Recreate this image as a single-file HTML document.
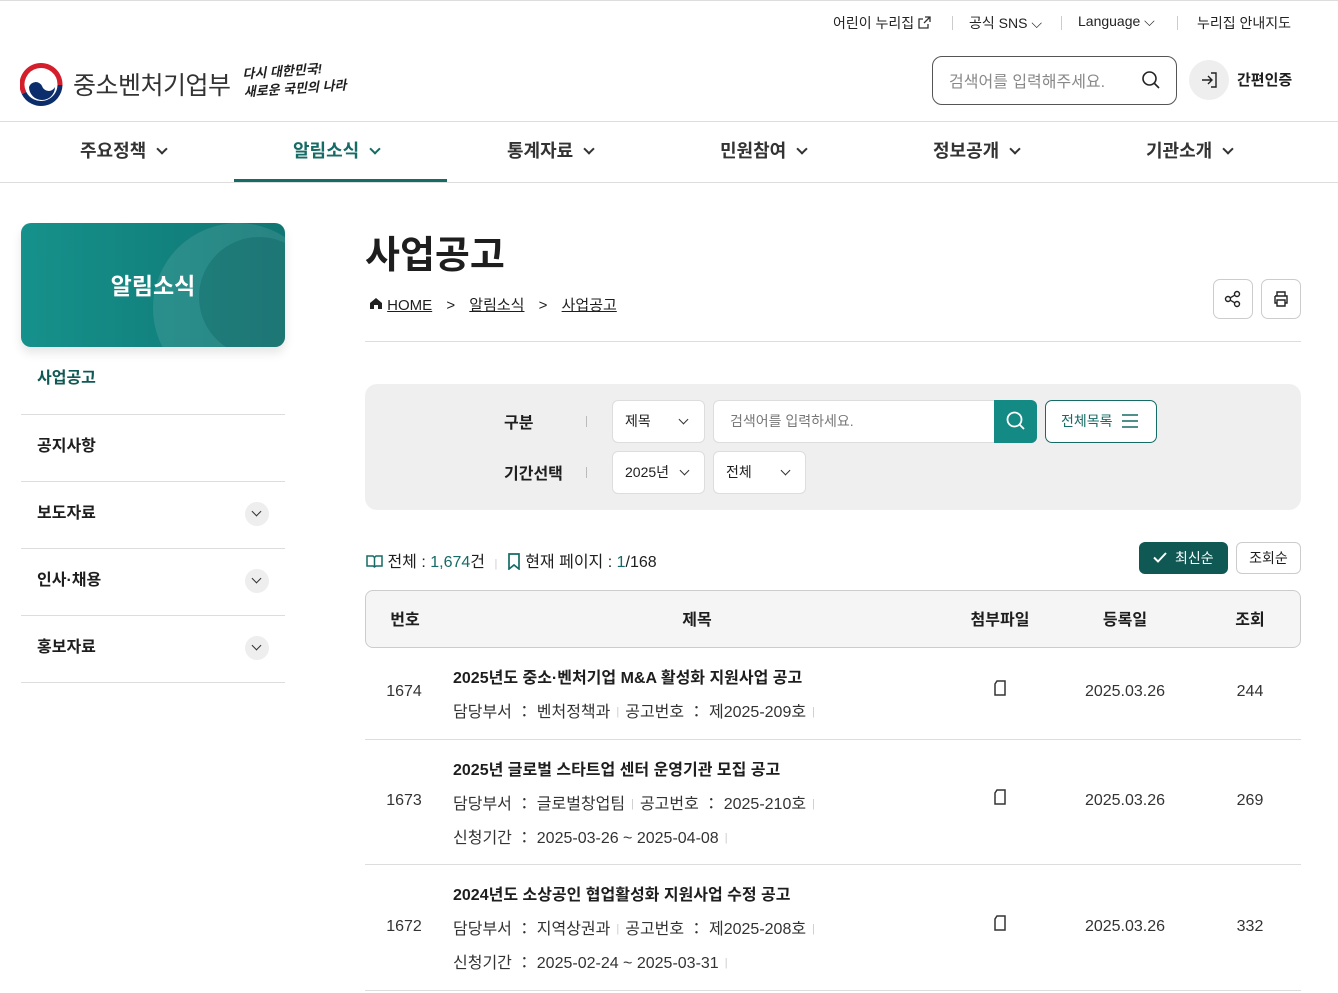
<!DOCTYPE html>
<html lang="ko"><head><meta charset="utf-8"><style>
*{box-sizing:border-box;margin:0;padding:0}
body{width:1338px;height:993px;overflow:hidden;background:#fff;font-family:"Liberation Sans","Noto Sans CJK KR",sans-serif;color:#1e1e1e;position:relative}
.a{position:absolute}
.top{top:0;left:0;width:1338px;height:1px;background:#ddd}
.util{top:13px;font-size:14px;color:#222;white-space:nowrap}
.sep{width:1px;height:14px;background:#ccc;top:16px}
.nav{top:121px;left:0;width:1338px;height:62px;border-top:1px solid #ddd;border-bottom:1px solid #ddd}
.nav div{position:absolute;top:15px;font-size:18px;font-weight:700;color:#333}
.chev{display:inline-block;width:8px;height:8px;border-right:2px solid #333;border-bottom:2px solid #333;transform:rotate(45deg);margin-left:12px;position:relative;top:-4px}
.side{left:21px;width:264px;border-bottom:1px solid #ddd;font-size:16px;font-weight:700;padding-left:16px}
.circ{position:absolute;right:16px;width:24px;height:24px;border-radius:50%;background:#eee}
.circ:after{content:"";position:absolute;left:8px;top:6px;width:6px;height:6px;border-right:1.5px solid #333;border-bottom:1.5px solid #333;transform:rotate(45deg)}
.box{background:#fff;border:1px solid #ddd;border-radius:6px;font-size:14px;padding:0 12px;line-height:41px}
.sm{display:inline-block;width:7px;height:7px;border-right:1.6px solid #333;border-bottom:1.6px solid #333;transform:rotate(45deg);position:absolute;top:15px}
.row{left:365px;width:936px;border-bottom:1px solid #ddd}
.t{position:absolute;left:88px;font-size:16px;font-weight:700}
.m{position:absolute;left:88px;font-size:16px;color:#333;white-space:nowrap}
.m i{font-style:normal;color:#ccc;font-size:11px;margin:0 6px;position:relative;top:-2px}
.c{position:absolute;font-size:16px;color:#333;transform:translateX(-50%)}
</style></head><body>
<div class="a top"></div>
<div class="a util" style="left:833px">어린이 누리집 <svg width="13" height="13" viewBox="0 0 13 13" style="vertical-align:-1px"><path d="M7 1h5v5M12 1L6 7M10 8v4H1V3h4" fill="none" stroke="#333" stroke-width="1.3"/></svg></div>
<div class="a sep" style="left:952px"></div>
<div class="a util" style="left:969px">공식 SNS ⌵</div>
<div class="a sep" style="left:1061px"></div>
<div class="a util" style="left:1078px">Language ⌵</div>
<div class="a sep" style="left:1177px"></div>
<div class="a util" style="left:1197px">누리집 안내지도</div>

<svg class="a" style="left:20px;top:63px" width="44" height="44" viewBox="0 0 44 44"><circle cx="22" cy="22" r="21" fill="#fff"/><path d="M4 30A19 19 0 1 1 40 22" fill="none" stroke="#d51e2b" stroke-width="5"/><path d="M40 22A19 19 0 0 1 4 30" fill="none" stroke="#0b2d6b" stroke-width="5"/><path d="M9 24a7 7 0 0 1 13 -1a7 7 0 0 0 13 1a13 13 0 0 1 -26 0z" fill="#0b2d6b"/></svg>
<div class="a" style="left:73px;top:66px;font-size:25px;color:#333;letter-spacing:-0.5px">중소벤처기업부</div>
<div class="a" style="left:243px;top:62px;font-size:13px;font-style:italic;font-weight:700;line-height:18px;transform:rotate(-4deg)">다시 대한민국!<br>새로운 국민의 나라</div>

<div class="a" style="left:932px;top:56px;width:245px;height:49px;border:1px solid #555;border-radius:10px"></div>
<div class="a" style="left:949px;top:68px;font-size:16px;color:#888">검색어를 입력해주세요.</div>
<svg class="a" style="left:1141px;top:70px" width="20" height="20" viewBox="0 0 20 20"><circle cx="8.5" cy="8.5" r="6.5" fill="none" stroke="#222" stroke-width="1.6"/><path d="M13.5 13.5L18 18" stroke="#222" stroke-width="1.6"/></svg>
<div class="a" style="left:1189px;top:60px;width:40px;height:40px;border-radius:50%;background:#eee"></div>
<svg class="a" style="left:1200px;top:71px" width="18" height="18" viewBox="0 0 18 18"><path d="M2 9h9M8 5l4 4-4 4M11 2h5v14h-5" fill="none" stroke="#222" stroke-width="1.4"/></svg>
<div class="a" style="left:1237px;top:69px;font-size:15px;font-weight:700">간편인증</div>

<div class="a nav">
<div style="left:80px">주요정책<span class="chev"></span></div>
<div style="left:293px;color:#156b65">알림소식<span class="chev" style="border-color:#156b65"></span></div>
<div style="left:507px">통계자료<span class="chev"></span></div>
<div style="left:720px">민원참여<span class="chev"></span></div>
<div style="left:933px">정보공개<span class="chev"></span></div>
<div style="left:1146px">기관소개<span class="chev"></span></div>
</div>
<div class="a" style="left:234px;top:179px;width:213px;height:3px;background:#156b65"></div>

<div class="a" style="left:21px;top:223px;width:264px;height:124px;border-radius:10px;background:linear-gradient(90deg,#16918b,#0f7673);overflow:hidden;box-shadow:0 6px 10px rgba(0,0,0,.1)">
<div style="position:absolute;left:132px;top:0;width:170px;height:170px;border-radius:50%;background:rgba(255,255,255,.1)"></div>
<div style="position:absolute;left:178px;top:14px;width:120px;height:120px;border-radius:50%;background:rgba(0,80,80,.25)"></div>
<div style="position:absolute;left:0;width:264px;top:44px;text-align:center;color:#fff;font-size:23px;font-weight:700">알림소식</div></div>
<div class="a side" style="top:357px;height:58px;line-height:44px;color:#0f5854">사업공고</div>
<div class="a side" style="top:415px;height:67px;line-height:63px">공지사항</div>
<div class="a side" style="top:482px;height:67px;line-height:63px">보도자료<span class="circ" style="top:20px"></span></div>
<div class="a side" style="top:549px;height:67px;line-height:63px">인사·채용<span class="circ" style="top:20px"></span></div>
<div class="a side" style="top:616px;height:67px;line-height:63px">홍보자료<span class="circ" style="top:20px"></span></div>

<div class="a" style="left:365px;top:224px;font-size:38px;font-weight:700">사업공고</div>
<div class="a" style="left:369px;top:294px;font-size:15px;white-space:nowrap">
<svg width="14" height="13" viewBox="0 0 14 13"><path d="M1 6L7 1l6 5v6H9V8H5v4H1z" fill="#222"/></svg>
<u>HOME</u> <span style="margin:0 10px">&gt;</span> <u>알림소식</u> <span style="margin:0 10px">&gt;</span> <u>사업공고</u></div>
<div class="a" style="left:1213px;top:279px;width:40px;height:40px;border:1px solid #ccc;border-radius:7px"></div>
<svg class="a" style="left:1223px;top:289px" width="20" height="20" viewBox="0 0 20 20"><circle cx="14" cy="5" r="2.5" fill="none" stroke="#222" stroke-width="1.4"/><circle cx="14" cy="15" r="2.5" fill="none" stroke="#222" stroke-width="1.4"/><circle cx="5" cy="10" r="2.5" fill="none" stroke="#222" stroke-width="1.4"/><path d="M7.2 8.8l4.6-2.6M7.2 11.2l4.6 2.6" stroke="#222" stroke-width="1.4"/></svg>
<div class="a" style="left:1261px;top:279px;width:40px;height:40px;border:1px solid #ccc;border-radius:7px"></div>
<svg class="a" style="left:1271px;top:289px" width="20" height="20" viewBox="0 0 20 20"><path d="M6 7V3h8v4M4 7h12v7h-2M6 14H4V7M6 11h8v6H6z" fill="none" stroke="#222" stroke-width="1.4"/></svg>
<div class="a" style="left:365px;top:341px;width:936px;height:1px;background:#ddd"></div>

<div class="a" style="left:365px;top:384px;width:936px;height:126px;background:#efefef;border-radius:12px"></div>
<div class="a" style="left:504px;top:409px;font-size:16px;font-weight:700">구분</div>
<div class="a" style="left:586px;top:416px;width:1px;height:11px;background:#bbb"></div>
<div class="a" style="left:504px;top:460px;font-size:16px;font-weight:700">기간선택</div>
<div class="a" style="left:586px;top:467px;width:1px;height:11px;background:#bbb"></div>
<div class="a box" style="left:612px;top:400px;width:93px;height:43px">제목<span class="sm" style="left:67px"></span></div>
<div class="a box" style="left:713px;top:400px;width:324px;height:43px;color:#777;padding-left:16px">검색어를 입력하세요.</div>
<div class="a" style="left:994px;top:400px;width:43px;height:43px;background:#148a84;border-radius:0 6px 6px 0"></div>
<svg class="a" style="left:1005px;top:410px" width="22" height="22" viewBox="0 0 22 22"><circle cx="9.5" cy="9.5" r="7" fill="none" stroke="#fff" stroke-width="1.8"/><path d="M14.5 14.5L19 19" stroke="#fff" stroke-width="1.8"/></svg>
<div class="a" style="left:1045px;top:400px;width:112px;height:43px;border:1px solid #156b65;border-radius:7px;background:#fff;font-size:14px;color:#156b65;line-height:41px;padding-left:15px">전체목록</div>
<svg class="a" style="left:1121px;top:413px" width="18" height="16" viewBox="0 0 18 16"><path d="M1 2h16M1 8h16M1 14h16" stroke="#156b65" stroke-width="1.5"/></svg>
<div class="a box" style="left:612px;top:451px;width:93px;height:43px">2025년<span class="sm" style="left:68px"></span></div>
<div class="a box" style="left:713px;top:451px;width:93px;height:43px">전체<span class="sm" style="left:68px"></span></div>

<div class="a" style="left:366px;top:548px;font-size:16px;white-space:nowrap"><svg width="17" height="14" viewBox="0 0 17 14" style="vertical-align:-1px"><path d="M1 2h6l1.5 1.5L10 2h6v10h-6l-1.5 1-1.5-1H1zM8.5 3.5v9" fill="none" stroke="#156b65" stroke-width="1.5"/></svg> 전체 : <span style="color:#156b65">1,674</span>건 <span style="color:#ccc;font-size:11px;margin:0 5px">|</span> <svg width="14" height="17" viewBox="0 0 14 17" style="vertical-align:-3px"><path d="M2 1h10v15l-5-4-5 4z" fill="none" stroke="#156b65" stroke-width="1.7"/></svg> 현재 페이지 : <span style="color:#156b65">1</span>/168</div>
<div class="a" style="left:1139px;top:542px;width:89px;height:32px;border-radius:6px;background:#0f5854;color:#fff;font-size:14px;line-height:32px;padding-left:36px">최신순</div>
<svg class="a" style="left:1153px;top:551px" width="14" height="13" viewBox="0 0 14 13"><path d="M1 6.5l4 4L13 2" fill="none" stroke="#fff" stroke-width="2"/></svg>
<div class="a" style="left:1236px;top:542px;width:65px;height:32px;border:1px solid #ccc;border-radius:6px;font-size:14px;line-height:30px;text-align:center">조회순</div>

<div class="a" style="left:365px;top:590px;width:936px;height:58px;background:#f5f5f5;border:1px solid #ccc;border-radius:8px;font-size:16px;font-weight:700">
<span class="c" style="left:39px;top:15px;color:#1e1e1e">번호</span><span class="c" style="left:331px;top:15px;color:#1e1e1e">제목</span><span class="c" style="left:634px;top:15px;color:#1e1e1e">첨부파일</span><span class="c" style="left:759px;top:15px;color:#1e1e1e">등록일</span><span class="c" style="left:884px;top:15px;color:#1e1e1e">조회</span></div>

<div class="a row" style="top:648px;height:92px">
<span class="c" style="left:39px;top:35px">1674</span>
<div class="t" style="top:16px">2025년도 중소·벤처기업 M&amp;A 활성화 지원사업 공고</div>
<div class="m" style="top:50px">담당부서 ： 벤처정책과<i>|</i>공고번호 ： 제2025-209호<i>|</i></div>
<span class="c" style="left:635px;top:32px"><svg width="14" height="16" viewBox="0 0 14 16"><path d="M4 1h8v14H2V4z" fill="none" stroke="#333" stroke-width="1.5"/></svg></span>
<span class="c" style="left:760px;top:35px">2025.03.26</span><span class="c" style="left:885px;top:35px">244</span></div>

<div class="a row" style="top:740px;height:125px">
<span class="c" style="left:39px;top:52px">1673</span>
<div class="t" style="top:16px">2025년 글로벌 스타트업 센터 운영기관 모집 공고</div>
<div class="m" style="top:50px">담당부서 ： 글로벌창업팀<i>|</i>공고번호 ： 2025-210호<i>|</i></div>
<div class="m" style="top:84px">신청기간 ： 2025-03-26 ~ 2025-04-08<i>|</i></div>
<span class="c" style="left:635px;top:49px"><svg width="14" height="16" viewBox="0 0 14 16"><path d="M4 1h8v14H2V4z" fill="none" stroke="#333" stroke-width="1.5"/></svg></span>
<span class="c" style="left:760px;top:52px">2025.03.26</span><span class="c" style="left:885px;top:52px">269</span></div>

<div class="a row" style="top:865px;height:126px">
<span class="c" style="left:39px;top:53px">1672</span>
<div class="t" style="top:16px">2024년도 소상공인 협업활성화 지원사업 수정 공고</div>
<div class="m" style="top:50px">담당부서 ： 지역상권과<i>|</i>공고번호 ： 제2025-208호<i>|</i></div>
<div class="m" style="top:84px">신청기간 ： 2025-02-24 ~ 2025-03-31<i>|</i></div>
<span class="c" style="left:635px;top:50px"><svg width="14" height="16" viewBox="0 0 14 16"><path d="M4 1h8v14H2V4z" fill="none" stroke="#333" stroke-width="1.5"/></svg></span>
<span class="c" style="left:760px;top:53px">2025.03.26</span><span class="c" style="left:885px;top:53px">332</span></div>
</body></html>
